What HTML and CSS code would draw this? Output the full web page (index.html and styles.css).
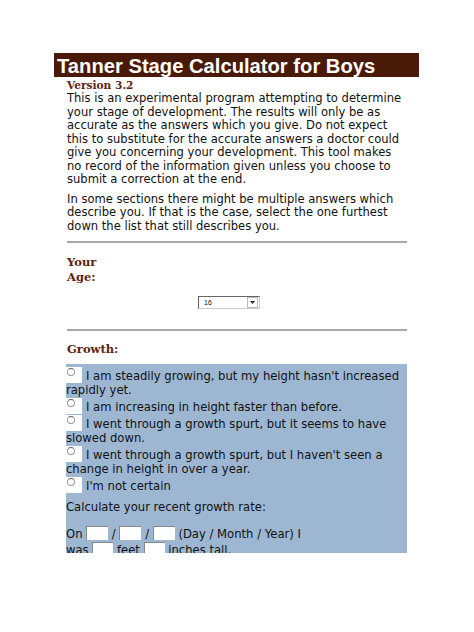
FILE: index.html
```html
<!DOCTYPE html>
<html>
<head>
<meta charset="utf-8">
<link rel="stylesheet" href="styles.css">
</head>
<body>
<div class="page">
  <div class="title">Tanner Stage Calculator for Boys</div>
  <div class="content">
    <div class="version">Version 3.2</div>
    <p class="para">This is an experimental program attempting to determine your stage of development. The results will only be as accurate as the answers which you give. Do not expect this to substitute for the accurate answers a doctor could give you concerning your development. This tool makes no record of the information given unless you choose to submit a correction at the end.</p>
    <p class="para gap">In some sections there might be multiple answers which describe you. If that is the case, select the one furthest down the list that still describes you.</p>
    <div class="rule rule1"></div>
    <div class="label age">Your<br>Age:</div>
    <div class="select-row">
      <div class="select"><span class="sel-val">16</span><span class="sel-btn"><svg width="5" height="3" viewBox="0 0 5 3"><path d="M0 0H5L2.5 3Z" fill="#222"/></svg></span></div>
    </div>
    <div class="rule rule2"></div>
    <div class="label growth">Growth:</div>
    <div class="box">
      <div class="item"><span class="radio"><span class="dot"></span></span>I am steadily growing, but my height hasn't increased rapidly yet.</div>
      <div class="item"><span class="radio"><span class="dot"></span></span>I am increasing in height faster than before.</div>
      <div class="item"><span class="radio"><span class="dot"></span></span>I went through a growth spurt, but it seems to have slowed down.</div>
      <div class="item"><span class="radio"><span class="dot"></span></span>I went through a growth spurt, but I haven't seen a change in height in over a year.</div>
      <div class="item"><span class="radio"><span class="dot"></span></span>I'm not certain</div>
      <div class="calc">Calculate your recent growth rate:</div>
      <div class="date">On <span class="field"></span> / <span class="field"></span> / <span class="field"></span> (Day / Month / Year) I<br>was <span class="field f2"></span> feet <span class="field f2"></span> inches tall.</div>
    </div>
  </div>
</div>
</body>
</html>
```
FILE: styles.css
```css
html, body {
  margin: 0;
  padding: 0;
  background: #fff;
}
.page {
  padding-top: 53px;
  font-family: "DejaVu Sans", Verdana, sans-serif;
  color: #111;
}
.title {
  margin-left: 54px;
  width: 362px;
  height: 24px;
  padding-left: 3px;
  background: #4a1a08;
  color: #fff;
  font-family: "Liberation Sans", Arial, sans-serif;
  font-weight: bold;
  font-size: 20.2px;
  line-height: 26px;
}
.content {
  margin-left: 67px;
  width: 338px;
}
.version {
  font-family: "DejaVu Serif", Georgia, serif;
  font-weight: bold;
  font-size: 10.6px;
  color: #5e2410;
  line-height: 14px;
  margin-top: 1px;
}
.para {
  margin: 0;
  font-size: 11.55px;
  line-height: 13.5px;
}
.para.gap {
  margin-top: 6px;
}
.rule {
  height: 2px;
  width: 340px;
  background: #a8a8a8;
}
.rule1 {
  margin-top: 8px;
}
.label {
  font-family: "DejaVu Serif", Georgia, serif;
  font-weight: bold;
  font-size: 11.5px;
  color: #5e2410;
  line-height: 15px;
}
.age {
  margin-top: 12px;
}
.select-row {
  margin-top: 11px;
  padding-left: 131px;
}
.select {
  width: 60px;
  height: 11px;
  border: 1px solid #666;
  border-right-color: #ccc;
  border-bottom-color: #ccc;
  display: flex;
  justify-content: space-between;
  align-items: center;
  font-family: "Liberation Sans", Arial, sans-serif;
  font-size: 7px;
  background: #fff;
}
.sel-val {
  padding-left: 5px;
}
.sel-btn {
  width: 9px;
  height: 9px;
  margin-right: 1px;
  border: 1px solid #bbb;
  display: flex;
  align-items: center;
  justify-content: center;
}
.rule2 {
  margin-top: 20px;
}
.growth {
  margin-top: 11px;
}
.box {
  box-sizing: border-box;
  margin-top: 7px;
  margin-left: -1px;
  padding-top: 2px;
  width: 341px;
  height: 189px;
  background: #9db7d3;
  font-size: 11.6px;
  line-height: 14px;
  color: #111;
}
.item {
  padding-top: 1px;
}
.radio {
  display: inline-block;
  width: 16px;
  height: 16px;
  background: #fff;
  vertical-align: -3px;
  margin-right: 4px;
  position: relative;
}
.dot {
  position: absolute;
  left: 1px;
  top: 1px;
  width: 6px;
  height: 6px;
  border-radius: 50%;
  border: 1px solid #999;
  border-top-color: #666;
  background: #fff;
}
.calc {
  margin-top: 7px;
}
.date {
  margin-top: 12px;
  line-height: 15px;
}
.field {
  display: inline-block;
  width: 21px;
  height: 13px;
  background: #fff;
  border-top: 1px solid #888;
  border-left: 1px solid #888;
  vertical-align: -2px;
}
.f2 {
  width: 20px;
}
```
